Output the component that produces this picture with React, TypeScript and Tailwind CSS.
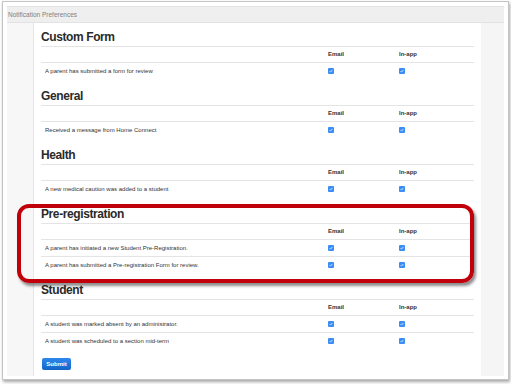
import React from 'react';

const sections = [
  { title: 'Custom Form', rows: ['A parent has submitted a form for review'] },
  { title: 'General', rows: ['Received a message from Home Connect'] },
  { title: 'Health', rows: ['A new medical caution was added to a student'] },
  {
    title: 'Pre-registration',
    rows: [
      'A parent has initiated a new Student Pre-Registration.',
      'A parent has submitted a Pre-registration Form for review.',
    ],
  },
  {
    title: 'Student',
    rows: [
      'A student was marked absent by an administrator.',
      'A student was scheduled to a section mid-term',
    ],
  },
];

function Check() {
  return (
    <span className="flex h-[6px] w-[6px] items-center justify-center rounded-[1px] bg-[#3a8df5]">
      <svg width="4" height="4" viewBox="0 0 4 4">
        <path d="M0.6 2.2 L1.5 3.1 L3.4 0.9" stroke="white" strokeWidth="0.7" fill="none" />
      </svg>
    </span>
  );
}

function Section({ title, rows }: { title: string; rows: string[] }) {
  return (
    <div className="mb-[9px]">
      <h3 className="h-[18px] border-b border-[#e4e4e4] text-[12px] font-bold leading-[16px] tracking-[-0.4px] text-[#2a2a2a]">
        {title}
      </h3>
      <div className="grid h-[16px] grid-cols-[283px_71px_79px] items-center border-b border-[#e4e4e4] text-[6px] font-bold text-[#333]">
        <div />
        <div className="px-[4px]">Email</div>
        <div className="px-[4px]">In-app</div>
      </div>
      {rows.map((r, i) => (
        <div
          key={r}
          className={`grid h-[16px] grid-cols-[283px_71px_79px] items-center text-[6px] text-[#333] ${i > 0 ? 'box-content border-t border-[#e4e4e4]' : ''}`}
        >
          <div className="px-[4px]">{r}</div>
          <div className="px-[4px]"><Check /></div>
          <div className="px-[4px]"><Check /></div>
        </div>
      ))}
    </div>
  );
}

export default function App() {
  return (
    <div className="relative h-[384px] w-[511px] overflow-hidden bg-white font-['Liberation_Sans',Arial,sans-serif]">
      {/* window frame */}
      <div className="ml-[2px] mt-[1px] h-[379px] w-[507px] border border-[#c4c4c4] bg-white px-[4px] pt-[4px] shadow-[1px_2px_3px_rgba(0,0,0,0.35)]">
        <div className="flex h-[17px] items-center border-y border-[#e2e2e2] bg-[#efefef] pl-[1px] text-[6.5px] text-[#808080]">
          Notification Preferences
        </div>
        <div className="flex h-[353px]">
          <div className="w-[27px] border-r border-[#e8e8e8] bg-[#f7f7f7]" />
          <div className="w-[447px] bg-white px-[7px] pt-[6px]">
            {sections.map((s) => (
              <Section key={s.title} title={s.title} rows={s.rows} />
            ))}
            <button className="ml-[1px] block h-[12px] w-[29px] rounded-[2px] bg-gradient-to-b from-[#2e88ee] to-[#1264c8] text-[6px] font-bold text-white">
              Submit
            </button>
          </div>
          <div className="w-[23px] bg-[#f5f5f5]" />
        </div>
      </div>

      {/* annotation highlight */}
      <div className="absolute left-[17px] top-[204px] h-[79px] w-[457px] rounded-[12px] border-[4px] border-[#c0000b] shadow-[2px_3px_3px_rgba(0,0,0,0.45)]" />
    </div>
  );
}
